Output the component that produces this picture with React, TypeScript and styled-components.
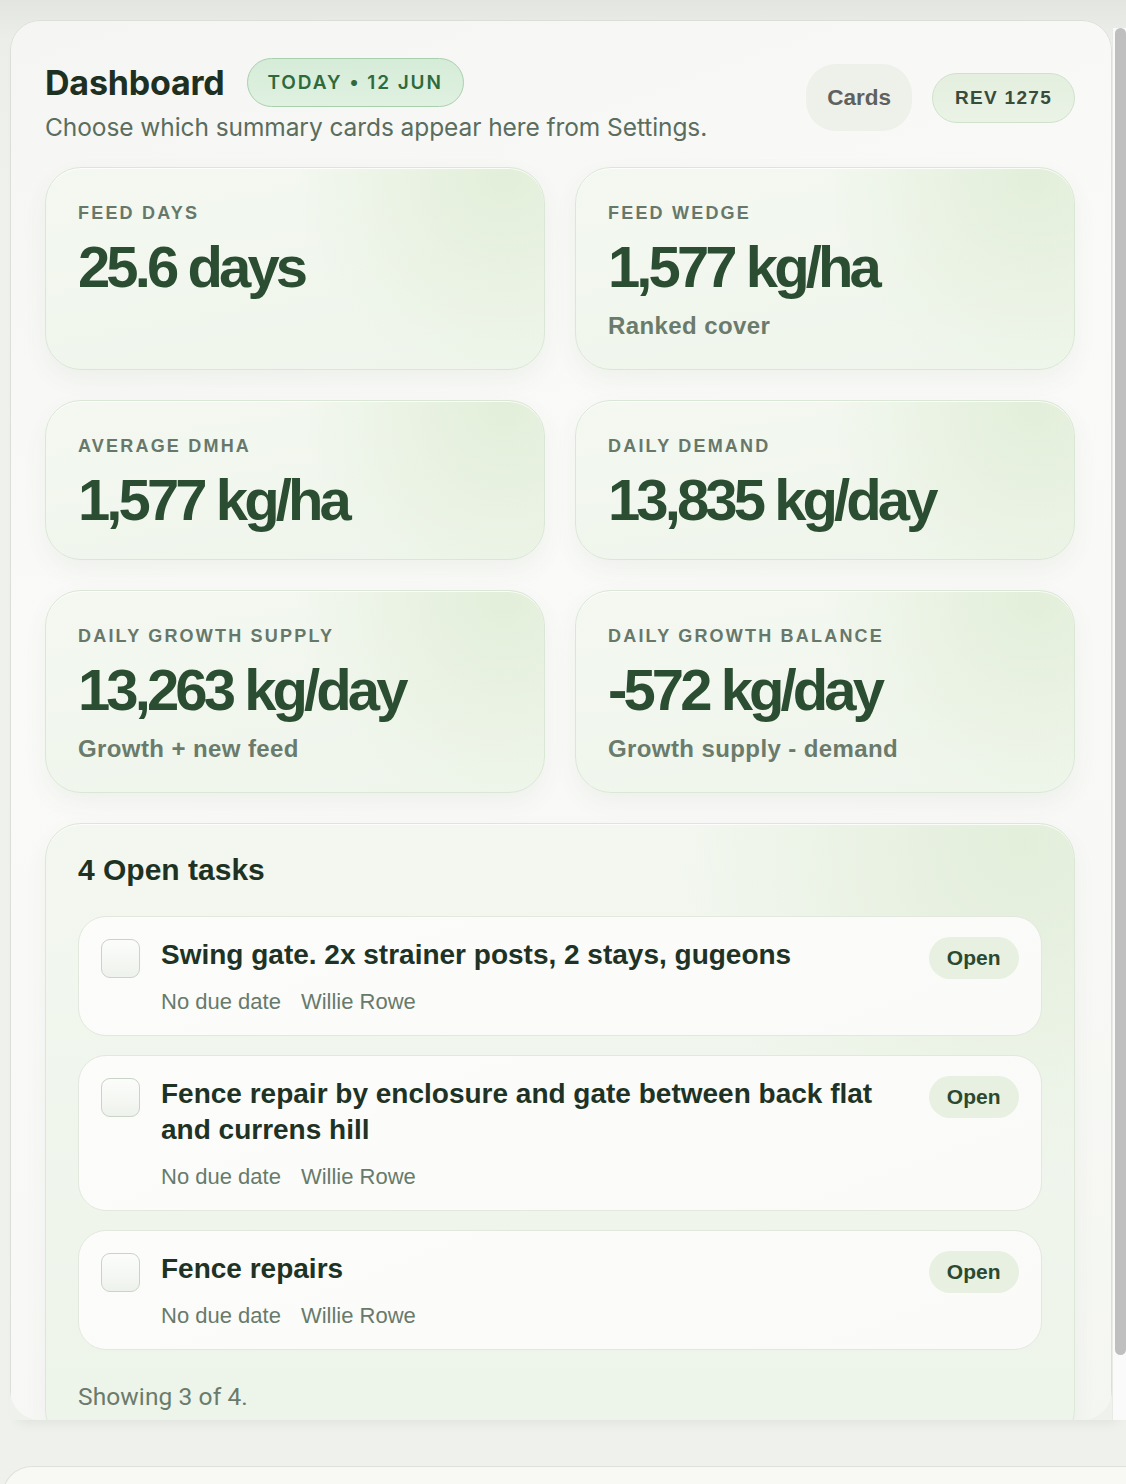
import styled, { createGlobalStyle } from 'styled-components';

type Metric = {
  label: string;
  value: string;
  note?: string;
};

type Task = {
  id: number;
  title: string;
  due: string;
  owner: string;
  status: string;
};

const metrics: Metric[] = [
  { label: 'Feed days', value: '25.6 days' },
  { label: 'Feed wedge', value: '1,577 kg/ha', note: 'Ranked cover' },
  { label: 'Average DMHA', value: '1,577 kg/ha' },
  { label: 'Daily demand', value: '13,835 kg/day' },
  { label: 'Daily growth supply', value: '13,263 kg/day', note: 'Growth + new feed' },
  { label: 'Daily growth balance', value: '-572 kg/day', note: 'Growth supply - demand' },
];

const tasks: Task[] = [
  {
    id: 1,
    title: 'Swing gate. 2x strainer posts, 2 stays, gugeons',
    due: 'No due date',
    owner: 'Willie Rowe',
    status: 'Open',
  },
  {
    id: 2,
    title: 'Fence repair by enclosure and gate between back flat and currens hill',
    due: 'No due date',
    owner: 'Willie Rowe',
    status: 'Open',
  },
  {
    id: 3,
    title: 'Fence repairs',
    due: 'No due date',
    owner: 'Willie Rowe',
    status: 'Open',
  },
];

const totalTasks = 4;

const App = () => {
  return (
    <>
      <GlobalStyle />
      <Page>
        <ScrollFrame>
          <Viewport>
            <Panel>
              <Header>
                <HeaderText>
                  <TitleRow>
                    <Title>Dashboard</Title>
                    <DateBadge>Today • 12 Jun</DateBadge>
                  </TitleRow>
                  <Subtitle>Choose which summary cards appear here from Settings.</Subtitle>
                </HeaderText>
                <Actions>
                  <CardsButton type='button'>Cards</CardsButton>
                  <RevPill>REV 1275</RevPill>
                </Actions>
              </Header>

              <MetricGrid>
                {metrics.map((m) => (
                  <MetricCard key={m.label}>
                    <MetricLabel>{m.label}</MetricLabel>
                    <MetricValue>{m.value}</MetricValue>
                    {m.note && <MetricNote>{m.note}</MetricNote>}
                  </MetricCard>
                ))}
              </MetricGrid>

              <TasksCard>
                <TasksTitle>{totalTasks} Open tasks</TasksTitle>
                <TaskList>
                  {tasks.map((t) => (
                    <TaskItem key={t.id}>
                      <Checkbox type='checkbox' aria-label={t.title} />
                      <TaskText>
                        <TaskTitle>{t.title}</TaskTitle>
                        <TaskMeta>
                          <span>{t.due}</span>
                          <span>{t.owner}</span>
                        </TaskMeta>
                      </TaskText>
                      <StatusBadge>{t.status}</StatusBadge>
                    </TaskItem>
                  ))}
                </TaskList>
                <TasksFooter>
                  Showing {tasks.length} of {totalTasks}.
                </TasksFooter>
              </TasksCard>
            </Panel>
          </Viewport>
          <ScrollTrack>
            <ScrollThumb />
          </ScrollTrack>
        </ScrollFrame>
        <NextPanel />
      </Page>
    </>
  );
};

export default App;

const GlobalStyle = createGlobalStyle`
  html, body {
    margin: 0;
    padding: 0;
  }
  body {
    background: linear-gradient(180deg, #e3e5e1 0px, #eceeea 40px, #eff1ed 200px, #eff1ed 100%);
    font-family: 'Liberation Sans', Arial, sans-serif;
    overflow: hidden;
  }
`;

const Page = styled.div`
  padding-top: 20px;
  height: 1484px;
  box-sizing: border-box;
`;

const ScrollFrame = styled.div`
  display: flex;
  margin-left: 10px;
  height: 1400px;
  box-shadow: 0 10px 12px -8px rgba(0, 0, 0, 0.07);
`;

const Viewport = styled.div`
  flex: 1;
  min-width: 0;
  overflow: hidden;
  border-radius: 30px;
`;

const ScrollTrack = styled.div`
  flex: 0 0 14px;
  display: flex;
  justify-content: flex-end;
  box-sizing: border-box;
  padding-top: 8px;
  background: linear-gradient(180deg, transparent 0px, transparent 8px, #fafafa 8px);
  border-left: 1px solid #e8eae6;
`;

const ScrollThumb = styled.div`
  flex: 0 0 11px;
  height: 1327px;
  border-radius: 6px;
  background: #bfbfbf;
`;

const Panel = styled.div`
  box-sizing: border-box;
  border: 1px solid #dcdfd9;
  border-radius: 30px;
  padding: 37px 36px 20px 34px;
  background: linear-gradient(160deg, #f5f6f3 0%, #fafbf8 35%, #f8f9f6 70%, #f4f6f1 100%);
`;

const Header = styled.header`
  display: flex;
  justify-content: space-between;
  align-items: flex-start;
`;

const HeaderText = styled.div`
  display: flex;
  flex-direction: column;
`;

const TitleRow = styled.div`
  display: flex;
  align-items: center;
  gap: 22px;
  height: 49px;
`;

const Title = styled.h1`
  margin: 0;
  font-family: Inter, 'Liberation Sans', sans-serif;
  font-size: 34px;
  font-weight: 700;
  letter-spacing: -0.2px;
  color: #1d3022;
`;

const DateBadge = styled.span`
  box-sizing: border-box;
  display: inline-flex;
  align-items: center;
  height: 49px;
  padding: 0 20px;
  border: 1.5px solid #a8cfae;
  border-radius: 999px;
  background: linear-gradient(180deg, #d5ecd8 0%, #e0f1e1 100%);
  font-family: Inter, 'Liberation Sans', sans-serif;
  font-size: 19px;
  font-weight: 600;
  letter-spacing: 1.9px;
  text-transform: uppercase;
  color: #2e6a3b;
`;

const Subtitle = styled.p`
  margin: 4px 0 0;
  font-family: Inter, 'Liberation Sans', sans-serif;
  font-size: 24.5px;
  line-height: 32px;
  letter-spacing: -0.08px;
  color: #5a6d5e;
`;

const Actions = styled.div`
  display: flex;
  align-items: center;
  gap: 20px;
  margin-top: 6px;
`;

const CardsButton = styled.button`
  height: 67px;
  padding: 0 21px;
  border: none;
  border-radius: 30px;
  background: #eef0ea;
  font-family: 'Liberation Sans', Arial, sans-serif;
  font-size: 22.5px;
  font-weight: 700;
  color: #5e615e;
  cursor: pointer;
`;

const RevPill = styled.span`
  box-sizing: border-box;
  display: inline-flex;
  align-items: center;
  height: 50px;
  padding: 0 22px;
  border: 1.5px solid #cfe1cb;
  border-radius: 999px;
  background: linear-gradient(180deg, #e4efdf 0%, #eaf3e6 100%);
  font-size: 19px;
  font-weight: 700;
  letter-spacing: 1.3px;
  color: #384c3b;
`;

const MetricGrid = styled.div`
  display: grid;
  grid-template-columns: 1fr 1fr;
  gap: 30px;
  margin-top: 24px;
`;

const MetricCard = styled.section`
  display: flex;
  flex-direction: column;
  padding: 34px 32px 27px;
  border: 1.5px solid #dbe7d6;
  border-radius: 36px;
  background:
    radial-gradient(circle at 92% 4%, rgba(224, 237, 214, 0.85) 0%, rgba(224, 237, 214, 0) 42%),
    linear-gradient(170deg, #f4f8f1 0%, #eff5eb 100%);
  box-shadow: 0 10px 24px rgba(60, 80, 60, 0.06), inset 0 1px 0 rgba(255, 255, 255, 0.8);
`;

const MetricLabel = styled.div`
  font-size: 18px;
  line-height: 22px;
  font-weight: 700;
  letter-spacing: 2.2px;
  text-transform: uppercase;
  color: #67786a;
`;

const MetricValue = styled.div`
  margin-top: 11px;
  font-size: 58px;
  line-height: 64px;
  font-weight: 700;
  letter-spacing: -3.9px;
  color: #2b4e32;
  white-space: nowrap;
`;

const MetricNote = styled.div`
  margin-top: 11px;
  font-size: 24px;
  line-height: 32px;
  font-weight: 700;
  letter-spacing: 0.4px;
  color: #6a7b6c;
`;

const TasksCard = styled.section`
  margin-top: 30px;
  padding: 28px 32px 32px;
  border: 1.5px solid #dce7d7;
  border-radius: 36px;
  background:
    radial-gradient(circle at 95% 3%, rgba(225, 237, 216, 0.9) 0%, rgba(225, 237, 216, 0) 30%),
    linear-gradient(180deg, #f3f7f0 0%, #edf4e9 100%);
  box-shadow: 0 10px 24px rgba(60, 80, 60, 0.05), inset 0 1px 0 rgba(255, 255, 255, 0.8);
`;

const TasksTitle = styled.h2`
  margin: 0 0 28px;
  font-size: 30px;
  line-height: 36px;
  font-weight: 700;
  color: #1e3224;
`;

const TaskList = styled.div`
  display: flex;
  flex-direction: column;
  gap: 19px;
`;

const TaskItem = styled.article`
  display: flex;
  align-items: flex-start;
  padding: 20px 22.5px 18px 22px;
  border: 1.5px solid #e2e8de;
  border-radius: 28px;
  background: linear-gradient(160deg, #fcfdfb 0%, #fafbf8 100%);
`;

const Checkbox = styled.input`
  appearance: none;
  flex: none;
  box-sizing: border-box;
  width: 39px;
  height: 39px;
  margin: 1.5px 21px 0 0;
  border: 1.5px solid #c9d3c6;
  border-radius: 9px;
  background: linear-gradient(180deg, #fcfdfb 0%, #eef2ec 100%);
  cursor: pointer;
`;

const TaskText = styled.div`
  flex: 1;
  min-width: 0;
  margin-right: 20px;
`;

const TaskTitle = styled.div`
  font-size: 28px;
  line-height: 36px;
  font-weight: 700;
  color: #1e3325;
`;

const TaskMeta = styled.div`
  display: flex;
  gap: 20px;
  margin-top: 13px;
  font-size: 22px;
  line-height: 31px;
  color: #687a6b;
`;

const StatusBadge = styled.span`
  flex: none;
  height: 42px;
  padding: 0 18px;
  border-radius: 999px;
  background: #e7f0e1;
  font-size: 21px;
  line-height: 42px;
  font-weight: 700;
  color: #2a4930;
`;

const TasksFooter = styled.p`
  margin: 31px 0 0;
  font-family: Roboto, 'Liberation Sans', sans-serif;
  font-size: 24.5px;
  line-height: 32px;
  letter-spacing: 0.1px;
  color: #6a7b6c;
`;

const NextPanel = styled.div`
  margin: 46px 0 0 2px;
  height: 120px;
  border-top: 1px solid #dfe2dc;
  border-left: 1px solid #dfe2dc;
  border-top-left-radius: 30px;
  background: #f8f9f5;
`;
